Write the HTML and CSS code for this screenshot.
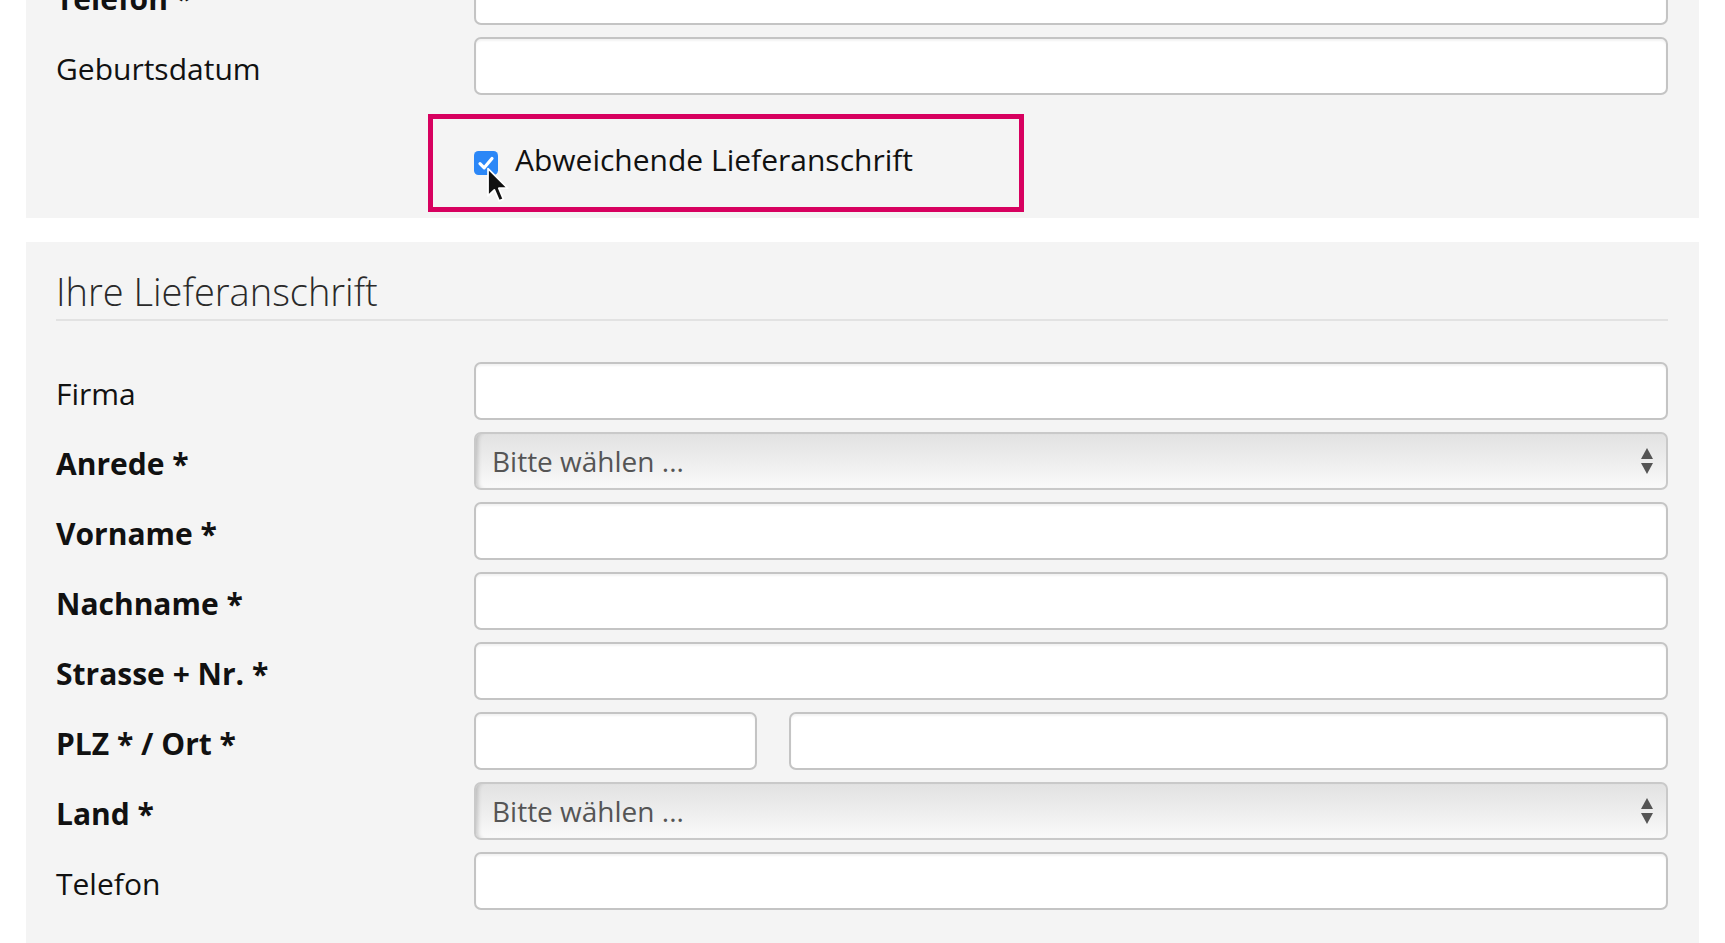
FILE: index.html
```html
<!DOCTYPE html>
<html lang="de">
<head>
<meta charset="utf-8">
<title>Lieferanschrift</title>
<link rel="stylesheet" href="styles.css">
</head>
<body>
<main class="page">
  <section class="panel panel-top">
    <div class="rows">
      <div class="row">
        <label class="lbl req">Telefon *</label>
        <input class="field" type="text">
      </div>
      <div class="row">
        <label class="lbl">Geburtsdatum</label>
        <input class="field" type="text">
      </div>
      <div class="row row-check">
        <span></span>
        <label class="check-box">
          <span class="check">
            <svg width="24" height="24" viewBox="0 0 24 24"><rect x="0" y="0" width="24" height="24" rx="4.5" fill="#2b87f7"/><polyline points="6,12.6 10.2,16.8 18,7.4" fill="none" stroke="#fff" stroke-width="3.2" stroke-linecap="round" stroke-linejoin="round"/></svg>
          </span>
          <span class="check-text">Abweichende Lieferanschrift</span>
          <svg class="cursor" width="24" height="38" viewBox="0 0 15 24"><path d="M1.2 1 L1.2 18.2 L5.2 14.4 L8.2 21.4 L10.9 20.3 L8 13.4 L13.6 13.4 Z" fill="#111" stroke="#fff" stroke-width="1.1" stroke-linejoin="round"/></svg>
        </label>
      </div>
    </div>
  </section>

  <section class="panel panel-delivery">
    <h2 class="panel-title">Ihre Lieferanschrift</h2>
    <div class="rows">
      <div class="row">
        <label class="lbl">Firma</label>
        <input class="field" type="text">
      </div>
      <div class="row">
        <label class="lbl req">Anrede *</label>
        <div class="select-wrap">
          <select class="select"><option>Bitte wählen ...</option></select>
          <svg class="arrows" width="14" height="26" viewBox="0 0 14 26"><polygon points="7,0 13,11 1,11" fill="#555"/><polygon points="1,15 13,15 7,26" fill="#555"/></svg>
        </div>
      </div>
      <div class="row">
        <label class="lbl req">Vorname *</label>
        <input class="field" type="text">
      </div>
      <div class="row">
        <label class="lbl req">Nachname *</label>
        <input class="field" type="text">
      </div>
      <div class="row">
        <label class="lbl req">Strasse + Nr. *</label>
        <input class="field" type="text">
      </div>
      <div class="row">
        <label class="lbl req">PLZ * / Ort *</label>
        <div class="pair">
          <input class="field field-plz" type="text">
          <input class="field field-ort" type="text">
        </div>
      </div>
      <div class="row">
        <label class="lbl req">Land *</label>
        <div class="select-wrap">
          <select class="select"><option>Bitte wählen ...</option></select>
          <svg class="arrows" width="14" height="26" viewBox="0 0 14 26"><polygon points="7,0 13,11 1,11" fill="#555"/><polygon points="1,15 13,15 7,26" fill="#555"/></svg>
        </div>
      </div>
      <div class="row">
        <label class="lbl">Telefon</label>
        <input class="field" type="text">
      </div>
    </div>
  </section>
</main>
</body>
</html>
```

FILE: styles.css
```css
html, body {
  margin: 0;
  padding: 0;
  background: #ffffff;
  overflow: hidden;
}

body {
  font-family: "Open Sans", "DejaVu Sans", sans-serif;
  color: #111;
}

.page {
  padding: 0 26px;
  margin-top: -60px;
  display: flex;
  flex-direction: column;
  gap: 24px;
}

.panel {
  background: #f4f4f4;
  padding: 0 31px 0 30px;
}

.panel-top {
  padding-top: 27px;
  padding-bottom: 6px;
}

.panel-delivery {
  padding-top: 26px;
  padding-bottom: 60px;
}

.panel-title {
  margin: 0 0 41px 0;
  font-size: 38px;
  line-height: 46px;
  font-weight: 300;
  color: #2a2a2a;
  padding-bottom: 5px;
  border-bottom: 2px solid #e2e2e2;
}

.rows {
  display: flex;
  flex-direction: column;
  gap: 12px;
}

.row {
  display: grid;
  grid-template-columns: 418px 1fr;
  align-items: center;
}

.lbl {
  font-size: 30px;
  font-weight: 400;
  padding-top: 5px;
  color: #111;
}

.lbl.req {
  font-weight: 700;
}

.field {
  box-sizing: border-box;
  height: 58px;
  width: 100%;
  margin: 0;
  border: 2px solid #c4c4c4;
  border-radius: 7px;
  background: #fff;
  box-shadow: inset 0 2px 2px rgba(0, 0, 0, 0.05);
  font: inherit;
  font-size: 28px;
  padding: 0 16px;
}

.pair {
  display: flex;
  gap: 32px;
}

.field-plz {
  width: 283px;
  flex: none;
}

.field-ort {
  flex: 1;
}

.select-wrap {
  position: relative;
}

.select {
  box-sizing: border-box;
  display: block;
  width: 100%;
  height: 58px;
  margin: 0;
  -webkit-appearance: none;
  appearance: none;
  border: 2px solid #c9c9c9;
  border-radius: 7px;
  background: linear-gradient(to bottom, #e2e2e2 0%, #ececec 45%, #fafafa 100%);
  box-shadow: inset 5px 0 4px -3px rgba(0, 0, 0, 0.18);
  font-family: "Open Sans", "DejaVu Sans", sans-serif;
  font-size: 28px;
  color: #555;
  padding: 0 40px 0 16px;
}

.arrows {
  position: absolute;
  right: 14px;
  top: 16px;
  pointer-events: none;
}

.row-check {
  margin-top: 7px;
}

.check-box {
  position: relative;
  box-sizing: border-box;
  width: 596px;
  height: 98px;
  margin-left: -46px;
  padding-left: 41px;
  border: 5px solid #d7005f;
  display: flex;
  align-items: center;
  gap: 17px;
}

.check {
  display: flex;
  width: 24px;
  height: 24px;
  margin-top: 0;
}

.check-text {
  font-size: 30px;
  color: #111;
  margin-top: -8px;
}

.cursor {
  position: absolute;
  left: 53px;
  top: 48px;
}
```
